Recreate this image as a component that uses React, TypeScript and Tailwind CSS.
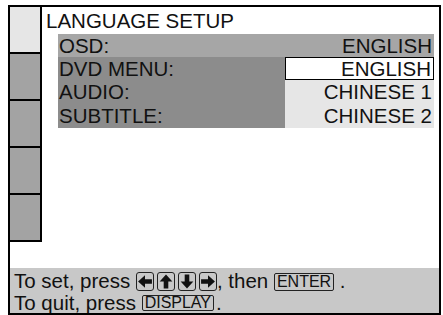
import React from "react";

type Dir = "left" | "up" | "down" | "right";

function ArrowKey({ dir }: { dir: Dir }) {
  const rot = { up: 0, right: 90, down: 180, left: 270 }[dir];
  return (
    <span className="flex items-center justify-center w-[18px] h-[19px] border border-[#222] rounded-[3px] mr-[3px]">
      <svg width="14" height="15" viewBox="0 0 12 13">
        <g transform={`rotate(${rot} 6 6.5)`}>
          <path d="M6 0.5 L11.5 6.5 L8 6.5 L8 12.5 L4 12.5 L4 6.5 L0.5 6.5 Z" fill="#111" />
        </g>
      </svg>
    </span>
  );
}

function KeyLabel({ children, tall }: { children: React.ReactNode; tall?: boolean }) {
  return (
    <span
      className={
        "flex items-center border border-[#222] rounded-[2px] px-[2px] text-[16px] leading-none " +
        (tall ? "h-[18px] mt-[2px]" : "h-[16px] mt-[1px]")
      }
    >
      {children}
    </span>
  );
}

const rows = [
  { label: "OSD:", value: "ENGLISH", kind: "top" },
  { label: "DVD MENU:", value: "ENGLISH", kind: "selected" },
  { label: "AUDIO:", value: "CHINESE 1", kind: "option" },
  { label: "SUBTITLE:", value: "CHINESE 2", kind: "option" },
];

export default function App() {
  return (
    <div
      className="w-[443px] h-[315px] bg-white text-[#111] pt-[5px] pl-[8px]"
      style={{ fontFamily: '"Liberation Sans", Arial, sans-serif' }}
    >
      <div className="w-[433px] h-[310px] border-2 border-black flex flex-col">
        <div className="flex-1 flex">
          <div className="flex flex-col w-[32px] self-start">
            <div className="h-[47px] bg-[#e6e6e6] border-r-2 border-b-2 border-black" />
            <div className="h-[47px] bg-[#a3a3a3] border-r-2 border-b-2 border-black" />
            <div className="h-[47px] bg-[#a3a3a3] border-r-2 border-b-2 border-black" />
            <div className="h-[47px] bg-[#a3a3a3] border-r-2 border-b-2 border-black" />
            <div className="h-[47px] bg-[#a3a3a3] border-r-2 border-b-2 border-black" />
          </div>
          <div className="flex-1 flex flex-col pt-[2px]">
            <div className="pl-[4px] text-[20.5px] leading-[23px] h-[25px]">LANGUAGE SETUP</div>
            <div className="ml-[16px] mr-[5px] flex flex-col text-[20.5px] leading-[22px]">
              {rows.map((r, i) => (
                <div
                  key={r.label}
                  className={
                    "flex " +
                    (i < 2 ? "h-[23px] " : "h-[24px] ") +
                    (r.kind === "top" ? "bg-[#a6a6a6]" : "")
                  }
                >
                  <div
                    className={
                      "w-[227px] pl-[1px] flex items-center " +
                      (r.kind === "top" ? "" : "bg-[#8c8c8c]")
                    }
                  >
                    {r.label}
                  </div>
                  <div
                    className={
                      "flex-1 flex items-center justify-end pr-[2px] " +
                      (r.kind === "selected"
                        ? "bg-white border border-black"
                        : r.kind === "option"
                        ? "bg-[#e6e6e6]"
                        : "")
                    }
                  >
                    {r.value}
                  </div>
                </div>
              ))}
            </div>
          </div>
        </div>
        <div className="h-[45px] bg-[#c8c8c8] pt-[2px] pl-[4px] text-[20.5px] leading-[22px] overflow-hidden">
          <div className="flex items-center h-[22px] whitespace-pre">
            <span>To set, press </span>
            <ArrowKey dir="left" />
            <ArrowKey dir="up" />
            <ArrowKey dir="down" />
            <ArrowKey dir="right" />
            <span className="-ml-[3px]">, then </span>
            <KeyLabel tall>ENTER</KeyLabel>
            <span> .</span>
          </div>
          <div className="flex items-center h-[21px] whitespace-pre">
            <span>To quit, press </span>
            <KeyLabel>DISPLAY</KeyLabel>
            <span className="ml-[2px]">.</span>
          </div>
        </div>
      </div>
    </div>
  );
}
